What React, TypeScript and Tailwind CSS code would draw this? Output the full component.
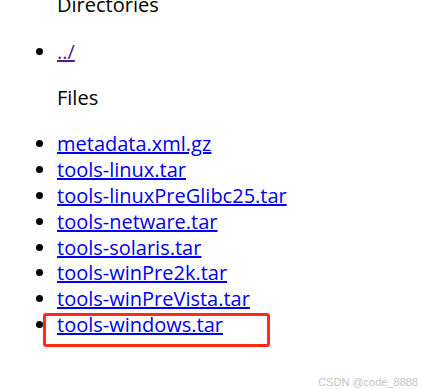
import React from "react";

const files = [
  "metadata.xml.gz",
  "tools-linux.tar",
  "tools-linuxPreGlibc25.tar",
  "tools-netware.tar",
  "tools-solaris.tar",
  "tools-winPre2k.tar",
  "tools-winPreVista.tar",
  "tools-windows.tar",
];

export default function App() {
  return (
    <div className="relative h-[389px] w-[422px] overflow-hidden bg-white font-['Open_Sans','Noto_Sans_CJK_SC',sans-serif] text-[20px] leading-[26px] text-black">
      <div className="mt-[-8px] pl-[57px]">Directories</div>

      <ul className="mt-[21px] list-disc pl-[57px]">
        <li>
          <a href="#" className="text-[#551a8b] underline">
            ../
          </a>
        </li>
      </ul>

      <div className="mt-[20px] pl-[57px]">Files</div>

      <ul className="mt-[20px] list-disc pl-[57px]">
        {files.map((f) => (
          <li key={f} className="h-[25.9px]">
            <a href="#" className="text-[#0000ee] underline">
              {f}
            </a>
          </li>
        ))}
      </ul>

      {/* highlight box */}
      <div className="absolute left-[43px] top-[313px] h-[34px] w-[227px] rounded-[3px] border-[3px] border-[#ff2a1a]" />

      <div className="absolute bottom-[0px] right-[4px] font-['Liberation_Sans',sans-serif] text-[11px] leading-[14px] text-[#c4c4c4]">
        CSDN @code_8888
      </div>
    </div>
  );
}
